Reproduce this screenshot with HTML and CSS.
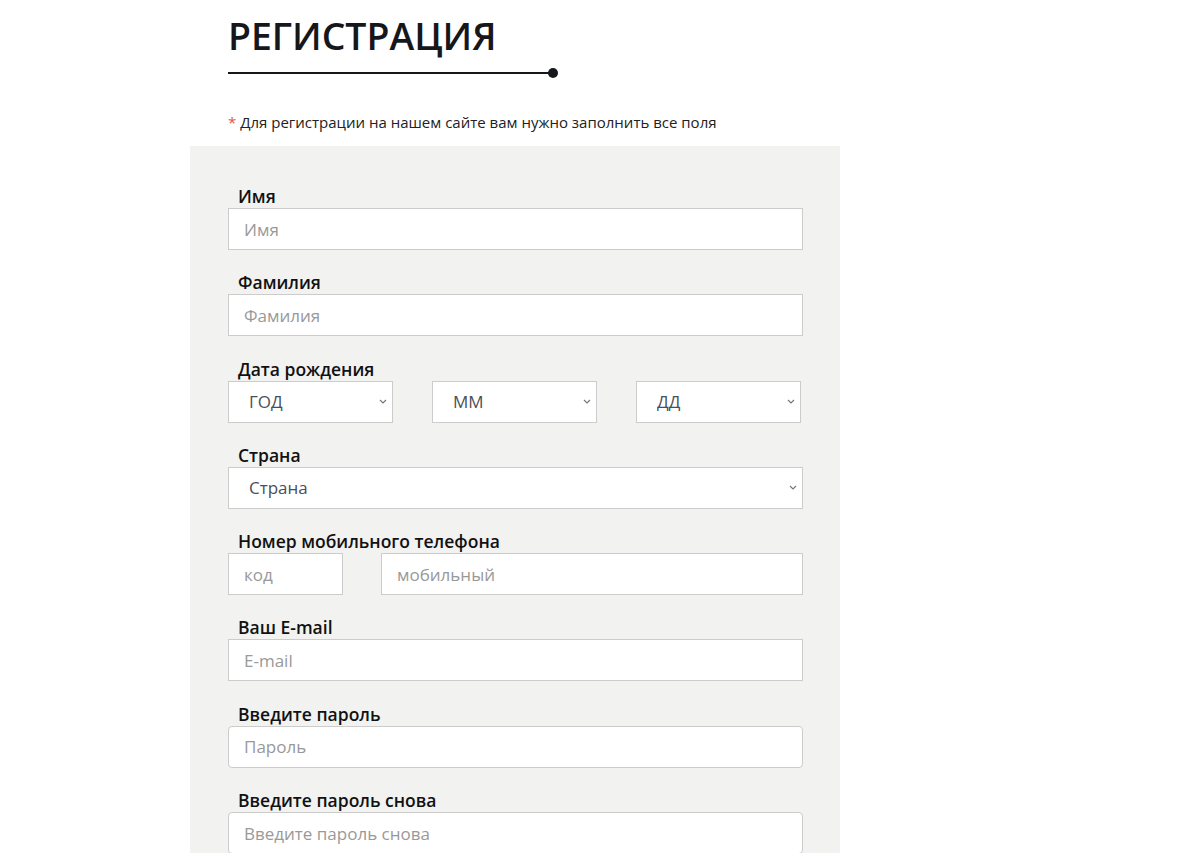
FILE: index.html
```html
<!DOCTYPE html>
<html lang="ru">
<head>
    <meta charset="UTF-8">
    <meta name="viewport" content="width=device-width, initial-scale=1.0">
    <title>Регистрация</title>
    <link rel="stylesheet" href="styles.css">
</head>
<body>

    <!-- Page header -->
    <div class="page">
        <h1 class="title">РЕГИСТРАЦИЯ</h1>
        <div class="title-line"></div>
        <p class="note"><span class="star">*</span> Для регистрации на нашем сайте вам нужно заполнить все поля</p>
    </div>

    <!-- Registration form -->
    <form class="reg-form">
        <div class="field">
            <label for="first-name">Имя</label>
            <input type="text" id="first-name" placeholder="Имя">
        </div>

        <div class="field">
            <label for="last-name">Фамилия</label>
            <input type="text" id="last-name" placeholder="Фамилия">
        </div>

        <div class="field">
            <label for="year">Дата рождения</label>
            <div class="row row-date">
                <select id="year">
                    <option>ГОД</option>
                </select>
                <select id="month">
                    <option>ММ</option>
                </select>
                <select id="day">
                    <option>ДД</option>
                </select>
            </div>
        </div>

        <div class="field">
            <label for="country">Страна</label>
            <select id="country">
                <option>Страна</option>
            </select>
        </div>

        <div class="field">
            <label for="phone-code">Номер мобильного телефона</label>
            <div class="row row-phone">
                <input type="text" id="phone-code" placeholder="код">
                <input type="text" id="phone" placeholder="мобильный">
            </div>
        </div>

        <div class="field">
            <label for="email">Ваш E-mail</label>
            <input type="text" id="email" placeholder="E-mail">
        </div>

        <div class="field">
            <label for="password">Введите пароль</label>
            <input type="password" id="password" class="rounded" placeholder="Пароль">
        </div>

        <div class="field">
            <label for="password2">Введите пароль снова</label>
            <input type="password" id="password2" class="rounded" placeholder="Введите пароль снова">
        </div>
    </form>

</body>
</html>
```

FILE: styles.css
```css
body {
    font-family: 'Open Sans', 'Noto Sans', sans-serif;
    background-color: #fff;
    color: #222;
    margin: 0;
}
.page {
    width: 612px;
    margin-left: 228px;
    padding-top: 10px;
}
.title {
    font-size: 37.4px;
    font-weight: 600;
    color: #16171b;
    margin: 0;
    line-height: 52px;
}
.title-line {
    position: relative;
    width: 325px;
    height: 2px;
    background-color: #16171b;
    margin-top: 10px;
}
.title-line::after {
    content: '';
    position: absolute;
    right: -5px;
    top: -4px;
    width: 10px;
    height: 10px;
    border-radius: 50%;
    background-color: #16171b;
}
.note {
    font-size: 15px;
    color: #222;
    margin: 38px 0 0;
    line-height: 20px;
}
.star {
    color: #e8553e;
}
.reg-form {
    width: 575px;
    margin: 14px 0 0 190px;
    padding: 39px 37px 0 38px;
    background-color: #f2f2f1;
}
.field {
    margin-bottom: 21.3px;
}
.field label {
    display: block;
    font-size: 17.5px;
    font-weight: 600;
    color: #111;
    line-height: 22px;
    padding-left: 10px;
    margin-bottom: 1px;
}
input[type="text"], input[type="password"], select {
    width: 100%;
    height: 42px;
    padding: 0 15px;
    font-family: inherit;
    font-size: 17px;
    color: #555;
    background-color: #fff;
    border: 1px solid #ccc;
    border-radius: 0;
    box-sizing: border-box;
    outline: none;
}
input::placeholder {
    color: #999;
}
input.rounded {
    border-radius: 4px;
}
select {
    appearance: none;
    -webkit-appearance: none;
    padding-left: 20px;
    color: #4a4f57;
    background-image: url("data:image/svg+xml,%3Csvg xmlns='http://www.w3.org/2000/svg' width='8' height='5' viewBox='0 0 8 5'%3E%3Cpath d='M1 1l3 3 3-3' fill='none' stroke='%23777' stroke-width='1.2'/%3E%3C/svg%3E");
    background-repeat: no-repeat;
    background-position: right 5px center;
}
.row {
    display: flex;
}
.row-date {
    gap: 39px;
}
.row-date select {
    width: 165px;
}
.row-phone {
    gap: 38px;
}
.row-phone #phone-code {
    width: 115px;
    flex: none;
}
```
